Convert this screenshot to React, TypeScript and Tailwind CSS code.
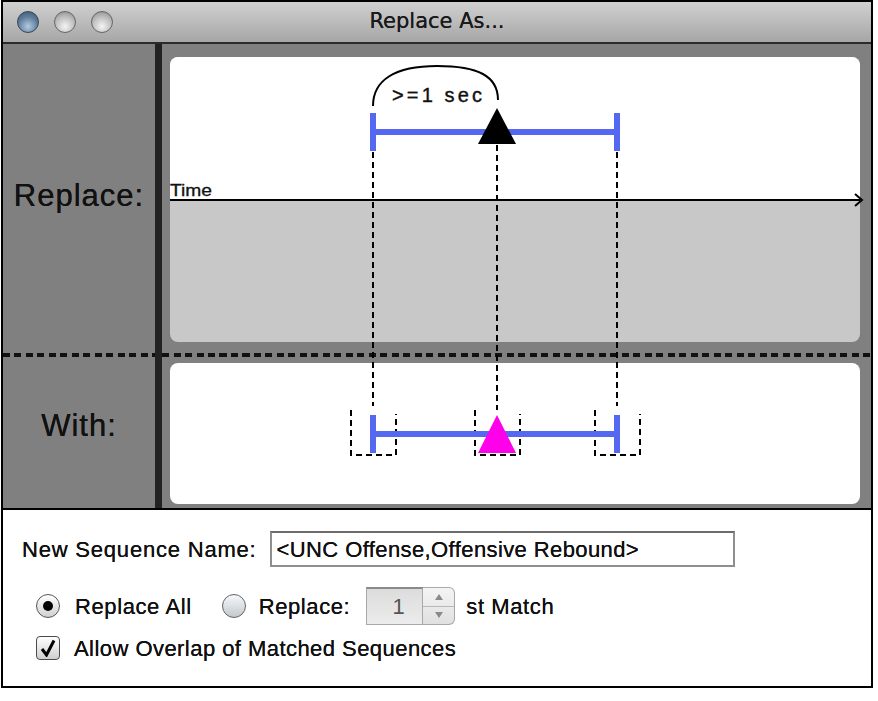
import React from "react";

function Light({ blue }: { blue?: boolean }) {
  return (
    <div
      className={
        blue
          ? "w-[22px] h-[22px] rounded-full border border-[#33475c] bg-[radial-gradient(circle_at_50%_72%,#b4cbe2,#5f7d9b_55%,#3a536c)]"
          : "w-[22px] h-[22px] rounded-full border border-[#666] bg-[radial-gradient(circle_at_50%_72%,#f4f4f4,#bdbdbd_55%,#858585)]"
      }
    />
  );
}

function Dots() {
  return <div className="h-[4px] w-full bg-[image:repeating-linear-gradient(90deg,#111_0_7px,transparent_7px_11.5px)]" />;
}

function Radio({ checked }: { checked?: boolean }) {
  return (
    <div
      className={
        checked
          ? "w-[24px] h-[24px] rounded-full border border-[#555] bg-[linear-gradient(#ffffff,#d0d0d0)] flex items-center justify-center shrink-0"
          : "w-[24px] h-[24px] rounded-full border border-[#5f6368] bg-[linear-gradient(#f6f8fa,#c3c8ce)] flex items-center justify-center shrink-0"
      }
    >
      {checked && <div className="w-[10px] h-[10px] rounded-full bg-black" />}
    </div>
  );
}

export default function App() {
  const blue = "#5468f2";
  return (
    <div className="relative w-[878px] h-[701px] bg-white font-['Liberation_Sans',Arial,sans-serif] text-[#111]">
      <div className="ml-[1px] w-[872px] h-[688px] border-2 border-black flex flex-col">
        {/* title bar */}
        <div className="h-[42px] shrink-0 border-b-2 border-[#2b2b2b] bg-[linear-gradient(#d0d0d0,#a6a6a6)] grid grid-cols-[1fr_auto_1fr] items-center">
          <div className="flex items-center gap-[15px] pl-[14px]">
            <Light blue />
            <Light />
            <Light />
          </div>
          <div className="font-['DejaVu_Sans',sans-serif] text-[21px] text-[#1a1a1a] [text-shadow:0_0_0.4px_#1a1a1a]">Replace As...</div>
          <div />
        </div>

        {/* middle */}
        <div className="h-[466px] shrink-0 border-b-2 border-black bg-[#808080] flex">
          <div className="w-[152px] shrink-0 flex flex-col [text-shadow:0_0_0.5px_#000]">
            <div className="h-[304px] flex items-center justify-center text-[31px] tracking-[1px]">Replace:</div>
            <div className="h-[14px] flex items-center">
              <Dots />
            </div>
            <div className="flex-1 flex items-center justify-center pb-[18px] text-[31px] tracking-[1px]">With:</div>
          </div>
          <div className="w-[7px] shrink-0 bg-[#222]" />
          <div className="flex-1 flex flex-col">
            <div className="h-[304px] pl-[8px] pr-[11px] pt-[13px] pb-[6px]">
              <div className="h-full rounded-[8px] overflow-hidden flex flex-col bg-[#c8c8c8]">
                <div className="h-[144px] bg-white border-b-2 border-black" />
              </div>
            </div>
            <div className="h-[14px] flex items-center">
              <Dots />
            </div>
            <div className="flex-1 pl-[8px] pr-[11px] pt-[1px] pb-[4px]">
              <div className="h-full rounded-[8px] bg-white" />
            </div>
          </div>
        </div>

        {/* bottom form */}
        <div className="flex-1 bg-white pt-[21px] text-[22px] tracking-[0.8px] [text-shadow:0_0_0.4px_#000]">
          <div className="flex items-center pl-[19px] h-[36px]">
            <span>New Sequence Name:</span>
            <div className="ml-[13px] w-[465px] h-[36px] border-2 border-[#8e8e8e] border-t-[#6c6c6c] flex items-center pl-[5px] bg-white tracking-[0.4px]">
              &lt;UNC Offense,Offensive Rebound&gt;
            </div>
          </div>
          <div className="mt-[20px] h-[38px] flex items-center pl-[33px] tracking-[0.6px]">
            <Radio checked />
            <span className="ml-[15px]">Replace All</span>
            <div className="ml-[30px]">
              <Radio />
            </div>
            <span className="ml-[13px]">Replace:</span>
            <div className="ml-[16px] flex h-[38px]">
              <div className="w-[57px] h-full border border-[#a8a8a8] border-t-2 border-t-[#8a8a8a] bg-[linear-gradient(#dcdcdc,#ececec)] flex items-center justify-end pr-[17px] text-[#555] [text-shadow:none]">
                1
              </div>
              <div className="w-[32px] h-full border border-l-0 border-[#a8a8a8] rounded-r-[6px] bg-[linear-gradient(#f4f4f4,#e0e0e0)] flex flex-col">
                <div className="flex-1 flex items-center justify-center border-b border-[#b8b8b8]">
                  <svg width="8" height="6" viewBox="0 0 8 6">
                    <polygon points="4,0 8,6 0,6" fill="#8a8a8a" />
                  </svg>
                </div>
                <div className="flex-1 flex items-center justify-center">
                  <svg width="8" height="6" viewBox="0 0 8 6">
                    <polygon points="0,0 8,0 4,6" fill="#8a8a8a" />
                  </svg>
                </div>
              </div>
            </div>
            <span className="ml-[11px]">st Match</span>
          </div>
          <div className="mt-[11px] h-[24px] flex items-center pl-[33px] tracking-[0.45px]">
            <div className="w-[24px] h-[24px] rounded-[4px] border border-[#4a4a4a] bg-[linear-gradient(#ffffff,#cfcfcf)] flex items-center justify-center shrink-0">
              <svg width="18" height="18" viewBox="0 0 18 18">
                <path d="M3 10 L7.5 16 L15 1.5" fill="none" stroke="#000" strokeWidth="3" strokeLinejoin="miter" />
              </svg>
            </div>
            <span className="ml-[14px]">Allow Overlap of Matched Sequences</span>
          </div>
        </div>
      </div>

      {/* diagram overlay */}
      <svg
        className="absolute left-0 top-0 pointer-events-none"
        width="878"
        height="701"
        viewBox="0 0 878 701"
        fontFamily="'Liberation Sans', Arial, sans-serif"
      >
        <text x="170" y="196" fontSize="16" textLength="42" lengthAdjust="spacingAndGlyphs" fill="#111" stroke="#111" strokeWidth="0.3">
          Time
        </text>
        <polyline points="855,194 862,200 855,206" fill="none" stroke="#000" strokeWidth="2" />

        <g stroke="#000" strokeWidth="2" strokeDasharray="6 4" fill="none">
          <line x1="373" y1="152" x2="373" y2="406" />
          <line x1="497" y1="145" x2="497" y2="410" />
          <line x1="617" y1="152" x2="617" y2="406" />
          <path d="M351 410 V455 H396 V414" />
          <path d="M475 410 V455 H520 V414" />
          <path d="M595 410 V455 H640 V414" />
        </g>

        {/* Replace diagram */}
        <line x1="373" y1="132" x2="617" y2="132" stroke={blue} strokeWidth="6" />
        <rect x="370" y="113" width="6" height="38" fill={blue} />
        <rect x="614" y="113" width="6" height="38" fill={blue} />
        <polygon points="497,108 478,144 516,144" fill="#000" />
        <path d="M373 106 C373 80 395 66 437 66 C478 66 498 76 498 100" fill="none" stroke="#000" strokeWidth="2" />
        <text x="392" y="102" fontSize="20" textLength="90" lengthAdjust="spacing" fill="#111" stroke="#111" strokeWidth="0.4">
          &gt;=1 sec
        </text>

        {/* With diagram */}
        <line x1="373" y1="434" x2="617" y2="434" stroke={blue} strokeWidth="6" />
        <rect x="370" y="415" width="6" height="38" fill={blue} />
        <rect x="614" y="415" width="6" height="38" fill={blue} />
        <polygon points="497,415 478,453 516,453" fill="#ff00ea" />
      </svg>
    </div>
  );
}
